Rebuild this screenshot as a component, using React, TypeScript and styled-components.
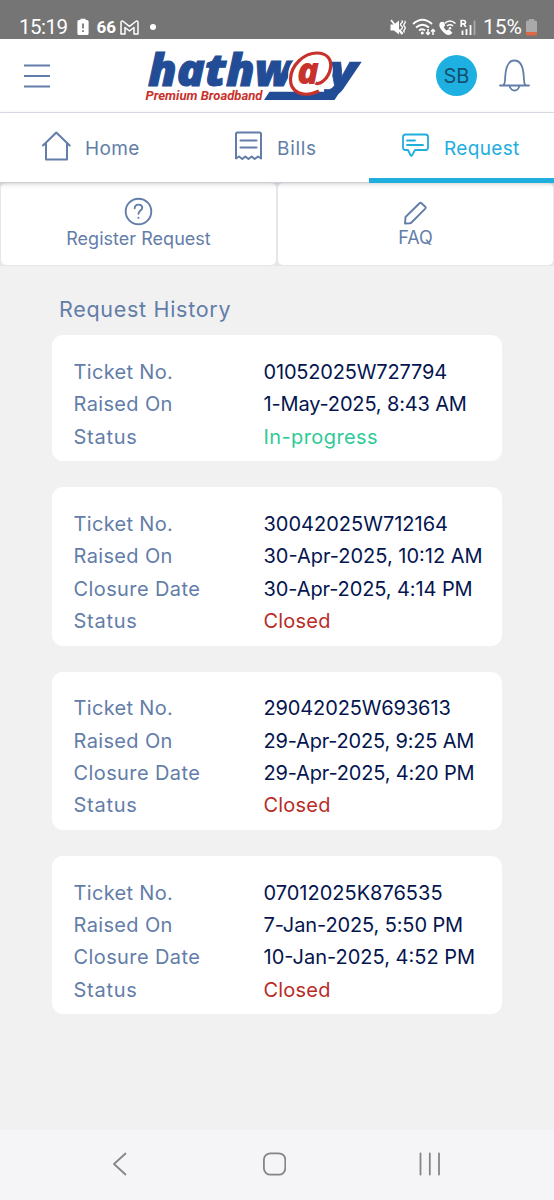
import React from "react";
import styled, { createGlobalStyle } from "styled-components";

const GlobalStyle = createGlobalStyle`
  * { box-sizing: border-box; }
  body { margin: 0; background: #f1f1f1; font-family: Inter, "Liberation Sans", sans-serif; }
  svg { display: block; flex: none; fill: none; }
`;

const steel = "#637da9";
const cyan = "#20aede";
const navy = "#04154f";

const Screen = styled.div`
  width: 554px;
  height: 1200px;
  display: flex;
  flex-direction: column;
  overflow: hidden;
  background: #f1f1f1;
`;

const StatusBar = styled.div`
  height: 39px;
  flex: none;
  padding: 14px 17px 0 19px;
  display: flex;
  justify-content: space-between;
  background: #757575;
  color: #fff;
`;

const StatusGroup = styled.div`
  display: flex;
  align-items: center;
  height: 26px;
`;

const StatusText = styled.span<{ $size: number; $weight?: number; $track?: number; $ml?: number }>`
  font-family: Roboto, sans-serif;
  font-size: ${(p) => p.$size}px;
  font-weight: ${(p) => p.$weight ?? 400};
  letter-spacing: ${(p) => p.$track ?? 0}px;
  margin-left: ${(p) => p.$ml ?? 0}px;
  line-height: 26px;
`;

const MoreDot = styled.span`
  width: 6px;
  height: 6px;
  margin-left: 11px;
  border-radius: 50%;
  background: #fff;
`;

const StatusGlyph = styled.svg<{ $ml: number }>`
  margin-left: ${(p) => p.$ml}px;
`;

const Header = styled.header`
  height: 74px;
  flex: none;
  display: flex;
  align-items: center;
  padding: 0 23px 0 24px;
  background: #fff;
  border-bottom: 1px solid #dfe3eb;
`;

const LogoSlot = styled.div`
  margin-left: 91px;
  flex: 1;
`;

const Avatar = styled.div`
  width: 41px;
  height: 41px;
  margin-right: 22px;
  border-radius: 50%;
  display: flex;
  align-items: center;
  justify-content: center;
  background: #1fb0e2;
  color: #14516f;
  font-size: 20px;
`;

const Tabs = styled.nav`
  height: 70px;
  flex: none;
  display: grid;
  grid-template-columns: 184px 185px 185px;
  background: #fff;
  border-bottom: 1px solid #cfd0d4;
  box-shadow: 0 1px 4px rgba(60, 65, 80, 0.25);
  position: relative;
`;

const Tab = styled.div<{ $active?: boolean; $pad: number; $gap: number }>`
  display: flex;
  align-items: center;
  height: 70px;
  padding-left: ${(p) => p.$pad}px;
  gap: ${(p) => p.$gap}px;
  color: ${(p) => (p.$active ? cyan : steel)};
  border-bottom: 5px solid ${(p) => (p.$active ? cyan : "transparent")};
`;

const TabText = styled.span<{ $track: number }>`
  font-size: 19px;
  line-height: 24px;
  margin-top: 6px;
  letter-spacing: ${(p) => p.$track}px;
`;

const Actions = styled.div`
  height: 83px;
  flex: none;
  display: grid;
  grid-template-columns: 1fr 1fr;
  gap: 2px;
  padding: 0 1px 1px;
  background: #e5e7ea;
`;

const Action = styled.div`
  display: flex;
  flex-direction: column;
  align-items: center;
  padding-top: 14px;
  background: #fff;
  border-radius: 5px;
  color: ${steel};
`;

const ActionText = styled.span<{ $track: number; $top: number }>`
  font-size: 18px;
  line-height: 22px;
  margin-top: ${(p) => p.$top}px;
  letter-spacing: ${(p) => p.$track}px;
`;

const Content = styled.main`
  flex: 1;
  padding: 29px 52px 0;
`;

const Title = styled.h1`
  margin: 0 0 12.4px 7px;
  font-size: 21.5px;
  line-height: 28px;
  font-weight: 400;
  letter-spacing: 0.7px;
  color: ${steel};
`;

const CardList = styled.div`
  display: flex;
  flex-direction: column;
  gap: 26px;
`;

const Card = styled.section`
  width: 450px;
  padding: 20.6px 0 8.2px 21.5px;
  background: #fff;
  border-radius: 11px;
`;

const Row = styled.div`
  display: grid;
  grid-template-columns: 190px 1fr;
  height: 32.4px;
  line-height: 32.4px;
  font-size: 20px;
  white-space: nowrap;
`;

const Label = styled.span<{ $track: number }>`
  color: ${steel};
  letter-spacing: ${(p) => p.$track}px;
`;

const Value = styled.span<{ $color: string; $track: number }>`
  color: ${(p) => p.$color};
  letter-spacing: ${(p) => p.$track}px;
`;

const NavBar = styled.footer`
  height: 70px;
  flex: none;
  display: flex;
  align-items: center;
  justify-content: space-between;
  padding: 0 112px 2px 112px;
  background: #f5f5f8;
`;

type Entry = [label: string, value: string, track: number];

const labelTrack: Record<string, number> = {
  "Ticket No.": 0.32,
  "Raised On": 0.36,
  "Closure Date": 0.4,
  Status: 0.75,
};

const tickets: Entry[][] = [
  [["Ticket No.", "01052025W727794", -0.17], ["Raised On", "1-May-2025, 8:43 AM", -0.16], ["Status", "In-progress", 0.4]],
  [["Ticket No.", "30042025W712164", 0], ["Raised On", "30-Apr-2025, 10:12 AM", 0], ["Closure Date", "30-Apr-2025, 4:14 PM", -0.1], ["Status", "Closed", 0.2]],
  [["Ticket No.", "29042025W693613", -0.13], ["Raised On", "29-Apr-2025, 9:25 AM", -0.19], ["Closure Date", "29-Apr-2025, 4:20 PM", -0.17], ["Status", "Closed", 0.2]],
  [["Ticket No.", "07012025K876535", 0], ["Raised On", "7-Jan-2025, 5:50 PM", -0.12], ["Closure Date", "10-Jan-2025, 4:52 PM", 0], ["Status", "Closed", 0.2]],
];

const valueColor = (v: string) => (v === "Closed" ? "#b92b27" : v === "In-progress" ? "#2fca98" : navy);

const BatteryAlert = () => (
  <StatusGlyph $ml={9} width="12" height="18" viewBox="0 0 12 18">
    <path d="M3.5 2V.8h5V2H10a1.6 1.6 0 0 1 1.6 1.6v11.8A1.6 1.6 0 0 1 10 17H2a1.6 1.6 0 0 1-1.6-1.6V3.600A1.6 1.6 0 0 1 2 2z" fill="#fff" />
    <path d="M6 5.500v5M6 12.200v1.800" stroke="#666" strokeWidth="1.6" />
  </StatusGlyph>
);

const MailIcon = () => (
  <StatusGlyph $ml={4} width="19" height="15" viewBox="0 0 19 15">
    <path d="M1 14V2.400Q1 .8 2.600 1L9.500 6.300 16.400 1Q18 .8 18 2.400V14H14V7.500L9.500 11 5 7.500V14z" stroke="#fff" strokeWidth="1.500" strokeLinejoin="round" />
  </StatusGlyph>
);

const SignalIcons = () => (
  <svg width="88" height="20" viewBox="388 16 88 20" stroke="#fff" strokeWidth="1.8">
    <path d="M389.500 23.500h3.500l5-4v14l-5-4h-3.500z" fill="#fff" stroke="none" />
    <path d="M390 19l11 14" />
    <path d="M400.500 19.500q2 1 0 2.500t0 3 0 3 0 3 0 2M403.500 20q1.500 1 0 2.500t0 3 0 3 0 3" strokeWidth="1.300" />
    <path d="M412 23q9.500-8.500 19 0M415 26.500q6.500-5.500 13 0M418 29.500q3.500-2.500 6 0" />
    <circle cx="421.300" cy="32" r="1.500" fill="#fff" stroke="none" />
    <path d="M427 28v5.500M425 31.500l2 2 2-2M432 34v-5.500M430 30.500l2-2 2 2" strokeWidth="1.500" />
    <path d="M440 21c-2 1-2.500 4 .5 8s6.500 6 9 4.500l2-1.800-3.800-3.500-2 1.200c-1.500-.8-2.500-2-3-3.500l1.500-1.500-1.700-3.700z" fill="#fff" stroke="none" />
    <path d="M443.500 22.500q5.500-5 11 0M446 25q3-2.500 6 0" strokeWidth="1.600" />
    <circle cx="449" cy="27.300" r="1.200" fill="#fff" stroke="none" />
    <path d="M460.200 26v-6.500h2.500q1.800 0 1.800 1.700t-1.800 1.700h-2.500M462.800 23l2 3" strokeWidth="1.600" />
    <path d="M461.500 29.500V34M465.500 28V34M469.500 24V34" strokeWidth="1.800" />
    <path d="M473.500 19.500V34" stroke="#aaa" strokeWidth="1.800" />
  </svg>
);

const Battery = () => (
  <StatusGlyph $ml={4} width="11" height="17" viewBox="0 0 11 17">
    <path d="M3 1.500V0h5v1.500h1.500A1.500 1.500 0 0 1 11 3v10H0V3a1.500 1.500 0 0 1 1.500-1.500z" fill="#aaa" />
    <path d="M0 13h11v2a1.500 1.500 0 0 1-1.500 1.500h-8A1.500 1.500 0 0 1 0 15z" fill="#dd6843" />
  </StatusGlyph>
);

const Logo = () => (
  <svg width="220" height="64" viewBox="142 44 220 64" fontFamily="Open Sans" fontStyle="italic" fontWeight="800">
    <g fill="#234c96" stroke="#234c96">
      <text x="148" y="85.500" fontSize="45" textLength="145" lengthAdjust="spacingAndGlyphs" strokeWidth="1">hathw</text>
      <text x="328" y="86" fontSize="43" textLength="30" lengthAdjust="spacingAndGlyphs" strokeWidth=".6">y</text>
    </g>
    <path d="M269.500 91.800H333L343 87 334.500 100H264z" fill="#234c96" />
    <ellipse cx="310.500" cy="72.500" rx="23" ry="20.500" transform="rotate(-32 310.500 72.500)" fill="#fff" />
    <path d="M319 91C303 98.500 290 92 290.500 79C291 65 304 53 317 53C327 53 332 59.500 330.500 68C329 78 320 85.500 315.500 83" stroke="#c8322d" strokeWidth="3.200" />
    <text x="297" y="83.500" fontSize="37" textLength="22" lengthAdjust="spacingAndGlyphs" fill="#c8322d">a</text>
    <text x="145.500" y="100" fontFamily="Roboto" fontSize="12.800" fontWeight="700" textLength="117" lengthAdjust="spacingAndGlyphs" fill="#c8322d">Premium Broadband</text>
  </svg>
);

export default function App() {
  return (
    <>
      <GlobalStyle />
      <Screen>
        <StatusBar>
          <StatusGroup>
            <StatusText $size={20.5} $track={-0.5}>15:19</StatusText>
            <BatteryAlert />
            <StatusText $size={17} $weight={700} $ml={8}>66</StatusText>
            <MailIcon />
            <MoreDot />
          </StatusGroup>
          <StatusGroup>
            <SignalIcons />
            <StatusText $size={21} $ml={6}>15%</StatusText>
            <Battery />
          </StatusGroup>
        </StatusBar>

        <Header>
          <svg width="27" height="24" viewBox="0 0 27 24" stroke={steel} strokeWidth="2">
            <path d="M0 1.500h26M0 12h26M0 22.500h26" />
          </svg>
          <LogoSlot><Logo /></LogoSlot>
          <Avatar>SB</Avatar>
          <svg width="32" height="33" viewBox="0 0 32 33" stroke={steel} strokeWidth="1.800" strokeLinecap="round" strokeLinejoin="round">
            <path d="M1 26.500h29M4.500 26q1.500-1 1.700-8C6.700 7 9.500 1.500 15.500 1.500S24.300 7 24.800 18q.2 7 1.700 8M10.500 27q1.500 4.500 5 4.500t5-4.500" />
          </svg>
        </Header>

        <Tabs>
          <Tab $pad={42} $gap={14}>
            <svg width="29" height="30" viewBox="0 0 29 30" stroke="currentColor" strokeWidth="2" strokeLinecap="round" strokeLinejoin="round">
              <path d="M1 14.500L14.300 1.500 27.700 14.500M4 12v16.500h21V12" />
            </svg>
            <TabText $track={0.4}>Home</TabText>
          </Tab>
          <Tab $pad={50} $gap={14}>
            <svg width="29" height="30" viewBox="0 0 29 30" stroke="currentColor" strokeWidth="2" strokeLinecap="round" strokeLinejoin="round">
              <path d="M2 27.500V3q0-1.500 1.500-1.500h22Q27 1.500 27 3v24.500l-3-2-3.300 2.500-3-2.500-3.200 2.500-3.200-2.500-3 2.500L5 25.500zM6.500 9.500h16M6.500 16.500h16" />
            </svg>
            <TabText $track={0.7}>Bills</TabText>
          </Tab>
          <Tab $active $pad={33} $gap={15}>
            <svg width="27" height="25" viewBox="0 0 27 25" stroke="currentColor" strokeWidth="1.800" strokeLinecap="round" strokeLinejoin="round">
              <path d="M3.500 1.500h20Q26 1.500 26 4v10.500Q26 17 23.500 17H13l-3 5.500q-.7.800-1.300 0L6 17H3.500Q1 17 1 14.500V4Q1 1.500 3.500 1.500zM5 7.500h8M5 12h16" />
            </svg>
            <TabText $track={0.35}>Request</TabText>
          </Tab>
        </Tabs>

        <Actions>
          <Action>
            <svg width="29" height="29" viewBox="0 0 29 29" stroke="currentColor" strokeWidth="1.900" strokeLinecap="round">
              <circle cx="14.500" cy="14.500" r="12.800" />
              <path d="M10.700 11.300q.2-3.700 3.800-3.700t3.800 3.200c0 2.700-3.800 2.900-3.800 6M14.500 20.700v.2" />
            </svg>
            <ActionText $track={0.03} $top={2}>Register Request</ActionText>
          </Action>
          <Action>
            <svg width="26" height="29" viewBox="0 0 26 29" stroke="currentColor" strokeWidth="1.900" strokeLinejoin="round">
              <path d="M2 26.500l.5-6.500L16.500 6.200q1-.9 2 0l3.800 3.500q.9 1 0 2L8.500 25.500q-.7.700-1.700.8z" />
            </svg>
            <ActionText $track={0} $top={1}>FAQ</ActionText>
          </Action>
        </Actions>

        <Content>
          <Title>Request History</Title>
          <CardList>
            {tickets.map((rows) => (
              <Card key={rows[0][1]}>
                {rows.map(([label, value, track]) => (
                  <Row key={label}>
                    <Label $track={labelTrack[label]}>{label}</Label>
                    <Value $color={valueColor(value)} $track={track}>{value}</Value>
                  </Row>
                ))}
              </Card>
            ))}
          </CardList>
        </Content>

        <NavBar>
          <svg width="17" height="24" viewBox="0 0 17 24" stroke="#858589" strokeWidth="1.800" strokeLinecap="round" strokeLinejoin="round">
            <path d="M13.500 1.500L2 12l11.500 10.500" />
          </svg>
          <svg width="24" height="24" viewBox="0 0 24 24" stroke="#858589" strokeWidth="1.800">
            <rect x="1.900" y="1.300" width="21.400" height="21.400" rx="6.500" />
          </svg>
          <svg width="24" height="24" viewBox="0 0 24 24" stroke="#858589" strokeWidth="1.800" strokeLinecap="round">
            <path d="M2.500 1.500v21M11.800 1.500v21M21 1.500v21" />
          </svg>
        </NavBar>
      </Screen>
    </>
  );
}
